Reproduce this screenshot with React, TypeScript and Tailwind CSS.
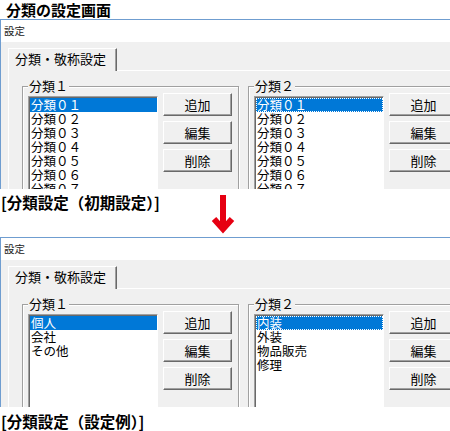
import React from 'react';

const initial1 = ['分類０１', '分類０２', '分類０３', '分類０４', '分類０５', '分類０６', '分類０７', '分類０８'];
const example1 = ['個人', '会社', 'その他'];
const example2 = ['内装', '外装', '物品販売', '修理'];

const ListBox: React.FC<{ items: string[]; focus?: boolean }> = ({ items, focus }) => (
  <div className="mt-[3px] w-[130px] h-[112px] shrink-0 bg-white border border-t-[#a0a0a0] border-l-[#a0a0a0] border-b-white border-r-white shadow-[inset_1px_1px_0_#696969] pt-px pl-px overflow-hidden">
    {items.map((item, i) => (
      <div
        key={i}
        className={`h-[14px] leading-[14px] text-[12.5px] pl-[1px] whitespace-nowrap ${
          i === 0 ? 'bg-[#0078d7] text-white' : 'text-black'
        } ${i === 0 && focus ? 'outline outline-1 outline-dotted outline-white -outline-offset-1' : ''}`}
      >
        {item}
      </div>
    ))}
  </div>
);

const WinButton: React.FC<{ label: string }> = ({ label }) => (
  <div className="w-[69px] h-[23px] shrink-0 flex items-center justify-center text-[13px] text-black bg-[#f0f0f0] border border-t-white border-l-white border-b-[#696969] border-r-[#696969] shadow-[inset_-1px_-1px_0_#a0a0a0]">
    {label}
  </div>
);

const Group: React.FC<{ label: string; items: string[]; focus?: boolean; width: string }> = ({ label, items, focus, width }) => (
  <div className={`relative ${width} h-[140px] shrink-0 border border-[#a0a0a0] shadow-[inset_1px_1px_0_#fff,1px_1px_0_#fff]`}>
    <span className="absolute -top-[8px] left-[5px] px-[1px] bg-[#f0f0f0] text-[13px] leading-[14px] text-black">
      {label}
    </span>
    <div className="flex gap-[5px] pt-[6px] pl-[5px]">
      <ListBox items={items} focus={focus} />
      <div className="flex flex-col gap-[5px]">
        <WinButton label="追加" />
        <WinButton label="編集" />
        <WinButton label="削除" />
      </div>
    </div>
  </div>
);

const SettingsWindow: React.FC<{ list1: string[]; list2: string[] }> = ({ list1, list2 }) => (
  <div className="h-[170px] overflow-hidden border-t border-l border-[#6f9dd0] flex flex-col">
    {/* title bar */}
    <div className="h-[22px] shrink-0 bg-white pl-[3px] pt-[5px] text-[10.5px] leading-[12px] text-[#222]">設定</div>

    <div className="flex-1 bg-[#f0f0f0]">
      {/* tab strip */}
      <div className="flex pt-[6px] pl-[7px]">
        <div className="relative z-10 -mb-px h-[23px] w-[109px] bg-[#f0f0f0] border-t border-l border-r border-t-white border-l-white border-r-[#696969] shadow-[inset_-1px_0_0_#a0a0a0] pl-[6px] pt-[2px] text-[13px] leading-[16px] text-black">
          分類・敬称設定
        </div>
      </div>

      {/* tab panel */}
      <div className="ml-[7px] h-full border-t border-l border-white">
        <div className="flex gap-[9px] pt-[15px] pl-[13px]">
          <Group label="分類１" items={list1} width="w-[217px]" />
          <Group label="分類２" items={list2} focus width="w-[230px]" />
        </div>
      </div>
    </div>
  </div>
);

export default function App() {
  return (
    <div className="w-[450px] h-[431px] overflow-hidden bg-white font-['Noto_Sans_CJK_JP',sans-serif]">
      <div className="h-[19px] pl-[6px] text-[15px] leading-[19px] font-bold text-black">分類の設定画面</div>

      <SettingsWindow list1={initial1} list2={initial1} />

      <div className="relative h-[48px] pt-[3px] pl-[1px] text-[15.5px] leading-[20px] font-bold text-black">
        [分類設定（初期設定）]
        <svg className="absolute left-[211px] top-[6px]" width="24" height="40" viewBox="0 0 24 40">
          <path d="M12 0 V35" stroke="#e60012" strokeWidth="6" fill="none" />
          <path d="M3 24 L12 34 L21 24" stroke="#e60012" strokeWidth="6" fill="none" strokeLinejoin="miter" strokeLinecap="butt" />
        </svg>
      </div>

      <SettingsWindow list1={example1} list2={example2} />

      <div className="pt-[4px] pl-[1px] text-[15.5px] leading-[20px] font-bold text-black">[分類設定（設定例）]</div>
    </div>
  );
}
